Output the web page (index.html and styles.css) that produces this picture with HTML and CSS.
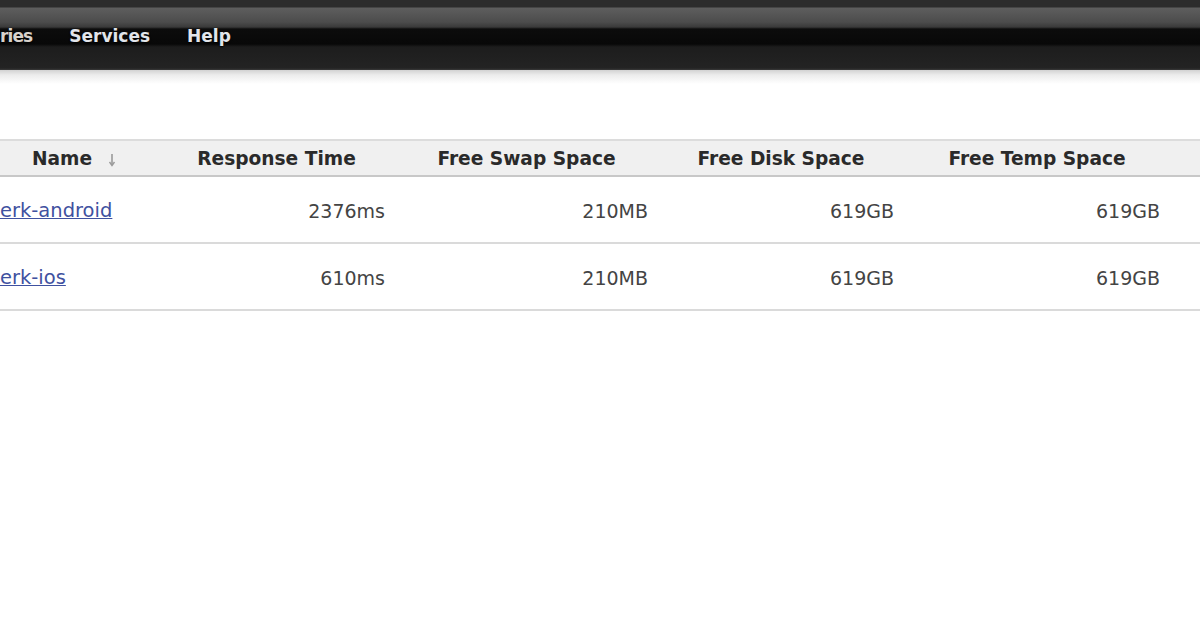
FILE: index.html
```html
<!DOCTYPE html>
<html>
<head>
<meta charset="utf-8">
<link rel="stylesheet" href="styles.css">
</head>
<body>
<div class="topbar">
  <nav class="nav">
    <a class="nav-item nav-partial" href="#">ries</a>
    <a class="nav-item" href="#">Services</a>
    <a class="nav-item" href="#">Help</a>
  </nav>
</div>
<div class="shadow"></div>
<main class="content">
  <table class="nodes">
    <colgroup>
      <col class="c-name">
      <col class="c-resp">
      <col class="c-swap">
      <col class="c-disk">
      <col class="c-temp">
      <col class="c-rest">
    </colgroup>
    <thead>
      <tr>
        <th class="th-name">Name <svg class="sort" width="8" height="14" viewBox="0 0 8 14"><path d="M4 1v10" stroke="#9a9a9a" stroke-width="1.6" fill="none"/><path d="M1.5 9 4 12.5 6.5 9" stroke="#9a9a9a" stroke-width="1.4" fill="none"/></svg></th>
        <th>Response Time</th>
        <th>Free Swap Space</th>
        <th>Free Disk Space</th>
        <th>Free Temp Space</th>
        <th></th>
      </tr>
    </thead>
    <tbody>
      <tr>
        <td class="td-name"><a href="#">erk-android</a></td>
        <td class="num">2376ms</td>
        <td class="num">210MB</td>
        <td class="num">619GB</td>
        <td class="num">619GB</td>
        <td></td>
      </tr>
      <tr>
        <td class="td-name"><a href="#">erk-ios</a></td>
        <td class="num">610ms</td>
        <td class="num">210MB</td>
        <td class="num">619GB</td>
        <td class="num">619GB</td>
        <td></td>
      </tr>
    </tbody>
  </table>
</main>
</body>
</html>
```
FILE: styles.css
```css
html, body {
  margin: 0;
  padding: 0;
  background: #ffffff;
  overflow: hidden;
  width: 1200px;
  height: 630px;
  font-family: "DejaVu Sans", Verdana, sans-serif;
}

.topbar {
  height: 70px;
  background: linear-gradient(to bottom,
    #2c2c2c 0px, #2c2c2c 7px,
    #5e5e5e 8px, #4c4c4c 22px, #3a3a3a 27px,
    #0c0c0c 29px, #080808 44px,
    #1d1d1d 47px, #232323 68px, #3a3a3a 70px);
  display: flex;
  align-items: flex-start;
}

.nav {
  display: flex;
  gap: 37px;
  padding-top: 25px;
}

.nav-item {
  color: #e2e5ea;
  font-weight: bold;
  font-size: 17px;
  line-height: 22px;
  text-decoration: none;
  text-shadow: 0 1px 2px #000;
}

.nav-partial {
  color: #d8d2cc;
  letter-spacing: -0.9px;
}

.shadow {
  height: 14px;
  background: linear-gradient(to bottom, #d2d2d2 0px, #ececec 5px, #ffffff 14px);
}

.content {
  padding-top: 55px;
}

.nodes {
  border-collapse: collapse;
  table-layout: fixed;
  width: 1248px;
  margin-left: -12px;
  color: #333333;
}

.c-name { width: 170px; }
.c-resp { width: 237px; }
.c-swap { width: 263px; }
.c-disk { width: 246px; }
.c-temp { width: 266px; }
.c-rest { width: 66px; }

.nodes thead tr {
  background: #f0f0f0;
  border-top: 2px solid #dcdcdc;
  border-bottom: 2px solid #c8c8c8;
}

.nodes th {
  height: 34px;
  padding: 0 9px;
  font-size: 18.6px;
  font-weight: bold;
  text-align: center;
  white-space: nowrap;
  color: #2a2a2a;
}

.nodes th.th-name {
  text-align: left;
  padding-left: 44px;
}

.sort {
  vertical-align: -2px;
  margin-left: 9px;
}

.nodes tbody tr {
  border-bottom: 2px solid #dadada;
}

.nodes td {
  height: 63px;
  padding: 2px 10px 0;
  font-size: 19px;
  white-space: nowrap;
}

.nodes td.td-name {
  padding-left: 12px;
}

.td-name a {
  color: #3f51a0;
  font-size: 19.5px;
  text-decoration: underline;
}

.num {
  text-align: right;
  color: #444444;
}
```
